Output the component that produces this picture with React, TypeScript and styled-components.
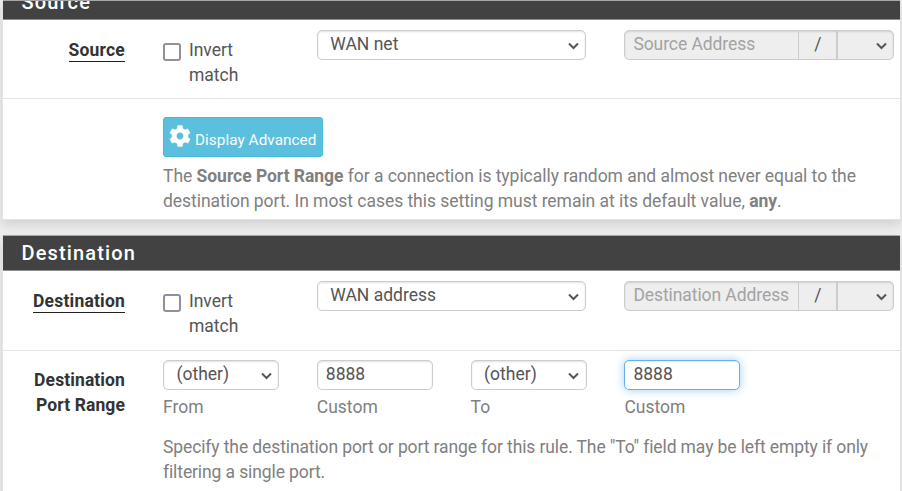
import React from "react";
import styled, { createGlobalStyle, css } from "styled-components";
import { FaCog } from "react-icons/fa";

const GlobalStyle = createGlobalStyle`
  * { box-sizing: border-box; }
  body {
    margin: 0;
    background: #eeeeee;
    font-family: Roboto, sans-serif;
    font-size: 17.5px;
    line-height: 25px;
    color: #555;
    overflow: hidden;
  }
`;

const Page = styled.main`
  width: 902px;
  height: 491px;
  padding: 0 1px 0 2px;
  overflow: hidden;
`;

const Panel = styled.section<{ $height: number }>`
  height: ${(p) => p.$height}px;
  margin-bottom: 15px;
  background: #fff;
  border: 1px solid #e3e3e3;
  border-top: 0;
  box-shadow: 0 5px 10px rgba(0, 0, 0, 0.12);
`;

const Heading = styled.header<{ $height: number }>`
  display: flex;
  align-items: flex-end;
  height: ${(p) => p.$height}px;
  padding: 0 0 4px 18.5px;
  overflow: hidden;
  background: #424242;
  border-top: 1px solid #a5a8a6;
  border-bottom: 1px solid #8e8e8e;
  color: #fff;
  font-size: 20px;
  font-weight: 500;
  letter-spacing: 1.15px;
`;

const FormRow = styled.div<{ $height: number; $last?: boolean }>`
  display: grid;
  grid-template-columns: 122px 1fr;
  column-gap: 38px;
  height: ${(p) => p.$height}px;
  border-bottom: ${(p) => (p.$last ? "0" : "1px solid #e3e3e3")};
`;

const Label = styled.div<{ $top?: number }>`
  padding-top: ${(p) => p.$top ?? 17}px;
  text-align: right;
  font-weight: 700;
  letter-spacing: 0.1px;
  color: #333;
`;

const Underlined = styled.span`
  display: inline-block;
  height: 24px;
  border-bottom: 1px solid #212121;
  letter-spacing: 0.2px;
`;

const Fields = styled.div<{ $top?: number }>`
  display: grid;
  grid-template-columns: repeat(4, 116px);
  column-gap: 37.8px;
  align-content: start;
  padding-top: ${(p) => p.$top ?? 9}px;
`;

const CheckLabel = styled.label`
  display: flex;
  gap: 7.5px;
  padding: 8px 0 0 0.4px;
`;

const Checkbox = styled.span`
  flex: none;
  width: 18px;
  height: 18px;
  margin-top: 5px;
  border: 2px solid #8f8f9d;
  border-radius: 3px;
  background: #fff;
`;

const control = css`
  height: 30px;
  border: 1px solid #ccc;
  border-radius: 5px;
  background: #fff;
  box-shadow: inset 0 1px 2px rgba(0, 0, 0, 0.12);
  line-height: 27px;
  white-space: nowrap;
`;

const SelectBox = styled.div<{ $wide?: boolean }>`
  ${control}
  display: flex;
  justify-content: space-between;
  padding: 0 6.5px 0 12.5px;
  width: ${(p) => (p.$wide ? "269.4px" : "116px")};
`;

const WideCell = styled.div`
  grid-column: span 2;
`;

const TextBox = styled.div<{ $focus?: boolean }>`
  ${control}
  padding: 0 8px;
  ${(p) =>
    p.$focus &&
    css`
      border-color: #66afe9;
      box-shadow: inset 0 1px 1px rgba(0, 0, 0, 0.075), 0 0 10px rgba(102, 175, 233, 0.6);
    `}
`;

const AddressGroup = styled.div`
  ${control}
  display: grid;
  grid-template-columns: 173px 40px 1fr;
  width: 269.8px;
  background: #eee;
`;

const Placeholder = styled.span`
  padding-left: 8px;
  letter-spacing: -0.08px;
  color: #a3a3a3;
`;

const Slash = styled.span`
  border-left: 1px solid #ccc;
  border-right: 2px solid #ccc;
  text-align: center;
`;

const MaskSelect = styled.span`
  display: flex;
  justify-content: flex-end;
  padding-right: 6px;
`;

const Chevron = styled.svg`
  flex: none;
  width: 11px;
  height: 8px;
  margin-top: 11px;
`;

const AdvancedBody = styled.div`
  padding-top: 18px;
`;

const InfoButton = styled.button`
  display: flex;
  align-items: flex-start;
  width: 160px;
  height: 40px;
  margin: 0 0 7px;
  padding: 7px 0 0 5px;
  border: 1px solid #46b8da;
  border-radius: 3px;
  background: #5bc0de;
  color: #fff;
  font: 400 15.3px/30px Roboto, sans-serif;
  letter-spacing: 0.05px;
  white-space: nowrap;

  svg {
    flex: none;
    width: 22px;
    height: 22px;
    margin-right: 4px;
  }
`;

const Help = styled.p`
  margin: 0;
  letter-spacing: -0.04px;
  color: #808080;
  white-space: nowrap;
`;

const SpacedHelp = styled(Help)`
  grid-column: 1 / -1;
  margin-top: 15px;
  letter-spacing: -0.11px;
`;

const Caption = styled.div`
  padding-top: 5px;
  color: #808080;
`;

function Arrow() {
  return (
    <Chevron viewBox="0 0 11 8" fill="none">
      <path d="M1 1.5 L5.5 6 L10 1.5" stroke="#555" strokeWidth="2" />
    </Chevron>
  );
}

function Select({ value, wide }: { value: string; wide?: boolean }) {
  return (
    <SelectBox $wide={wide}>
      <span>{value}</span>
      <Arrow />
    </SelectBox>
  );
}

function EndpointRow({ label, value, placeholder, height }: {
  label: string;
  value: string;
  placeholder: string;
  height: number;
}) {
  return (
    <FormRow $height={height}>
      <Label $top={18}>
        <Underlined>{label}</Underlined>
      </Label>
      <Fields $top={10}>
        <CheckLabel>
          <Checkbox />
          <span>Invert match</span>
        </CheckLabel>
        <WideCell>
          <Select wide value={value} />
        </WideCell>
        <AddressGroup>
          <Placeholder>{placeholder}</Placeholder>
          <Slash>/</Slash>
          <MaskSelect>
            <Arrow />
          </MaskSelect>
        </AddressGroup>
      </Fields>
    </FormRow>
  );
}

export default function App() {
  return (
    <Page>
      <GlobalStyle />
      <Panel $height={220}>
        <Heading $height={20}>Source</Heading>
        <EndpointRow label="Source" value="WAN net" placeholder="Source Address" height={79} />
        <FormRow $height={120} $last>
          <span />
          <AdvancedBody>
            <InfoButton>
              <FaCog />
              Display Advanced
            </InfoButton>
            <Help>
              The <b>Source Port Range</b> for a connection is typically random and almost never equal to the
              <br />
              destination port. In most cases this setting must remain at its default value, <b>any</b>.
            </Help>
          </AdvancedBody>
        </FormRow>
      </Panel>
      <Panel $height={270}>
        <Heading $height={36}>Destination</Heading>
        <EndpointRow label="Destination" value="WAN address" placeholder="Destination Address" height={80} />
        <FormRow $height={154} $last>
          <Label>
            Destination
            <br />
            Port Range
          </Label>
          <Fields>
            <div>
              <Select value="(other)" />
              <Caption>From</Caption>
            </div>
            <div>
              <TextBox>8888</TextBox>
              <Caption>Custom</Caption>
            </div>
            <div>
              <Select value="(other)" />
              <Caption>To</Caption>
            </div>
            <div>
              <TextBox $focus>8888</TextBox>
              <Caption>Custom</Caption>
            </div>
            <SpacedHelp>
              Specify the destination port or port range for this rule. The "To" field may be left empty if only
              <br />
              filtering a single port.
            </SpacedHelp>
          </Fields>
        </FormRow>
      </Panel>
    </Page>
  );
}
